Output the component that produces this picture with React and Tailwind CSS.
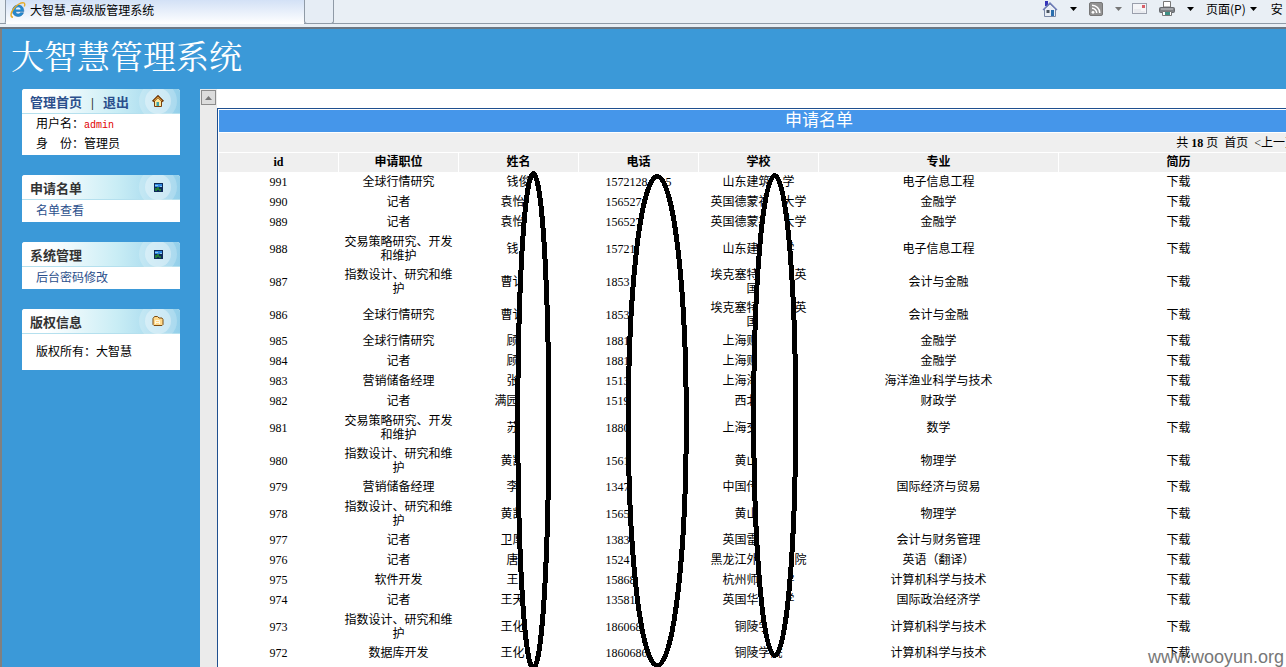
import React from "react";

const CJK = "font-['Liberation_Serif','Noto_Sans_CJK_SC',sans-serif]";

// "_" marks one concealed character in names, phones and schools.
const wide = (s) => s.replaceAll("_", "\u3000");
const digits = (s) => s.replaceAll("_", "\u00a0\u00a0");

const rows = [
  ["991", "全球行情研究", "钱俊", "1572128___5", "山东建筑_学", "电子信息工程"],
  ["990", "记者", "袁怡_", "156527_____", "英国德蒙福_大学", "金融学"],
  ["989", "记者", "袁怡_", "156527_____", "英国德蒙福_大学", "金融学"],
  ["988", "交易策略研究、开发\n和维护", "钱_", "15721______", "山东建__学", "电子信息工程"],
  ["987", "指数设计、研究和维\n护", "曹讠_", "1853_______", "埃克塞特___英\n国_", "会计与金融"],
  ["986", "全球行情研究", "曹讠_", "1853_______", "埃克塞特___英\n国_", "会计与金融"],
  ["985", "全球行情研究", "顾_", "1881_______", "上海财___", "金融学"],
  ["984", "记者", "顾_", "1881_______", "上海财___", "金融学"],
  ["983", "营销储备经理", "张_", "1513_______", "上海海___", "海洋渔业科学与技术"],
  ["982", "记者", "满园__", "1519_______", "西北__", "财政学"],
  ["981", "交易策略研究、开发\n和维护", "苏_", "1880_______", "上海交___", "数学"],
  ["980", "指数设计、研究和维\n护", "黄凯_", "1561_______", "黄山__", "物理学"],
  ["979", "营销储备经理", "李_", "1347_______", "中国传___", "国际经济与贸易"],
  ["978", "指数设计、研究和维\n护", "黄凯_", "1565_______", "黄山__", "物理学"],
  ["977", "记者", "卫厚_", "1383_______", "英国雷___", "会计与财务管理"],
  ["976", "记者", "唐_", "1524_______", "黑龙江外___院", "英语（翻译）"],
  ["975", "软件开发", "王_", "15868______", "杭州师__学", "计算机科学与技术"],
  ["974", "记者", "王天_", "13581______", "英国华__学", "国际政治经济学"],
  ["973", "指数设计、研究和维\n护", "王化_", "186068_____", "铜陵学_", "计算机科学与技术"],
  ["972", "数据库开发", "王化_", "1860686____", "铜陵学院", "计算机科学与技术"],
];

function IeIcon() {
  return (
    <svg width="16" height="16" viewBox="0 0 16 16" aria-hidden="true">
      <path d="M13.8 9.6H5.6c.2 1.5 1.300 2.300 2.600 2.300 1.100 0 1.800-.5 2.200-1.200h3.100c-.7 2.300-2.700 3.800-5.400 3.800-3.300 0-5.700-2.400-5.700-5.700C2.400 5.500 4.800 3 8.100 3c3.600 0 5.800 2.600 5.700 6.600z" fill="#2489cf" stroke="#14609f" strokeWidth=".5" />
      <path d="M5.700 7.500h4.900C10.500 6.200 9.500 5.300 8.200 5.300S5.900 6.200 5.700 7.500z" fill="#e8f4fc" />
      <path d="M3 15.200C.2 15 .4 11.200 3.500 7 6.600 2.700 11.500 0 13.800.9c1.200.5 1.200 2 .5 3.600" fill="none" stroke="#e5ac2c" strokeWidth="1.400" />
    </svg>
  );
}

function HomeIcon() {
  return (
    <svg width="16" height="18" viewBox="0 0 16 18" aria-hidden="true">
      <path d="M3 1h3v5H3z" fill="#3434b8" />
      <path d="M2.500 9 8 4l5.500 5v7.500h-11z" fill="#e9eef5" stroke="#7887a4" />
      <path d="M1 10 8 3l7 7" fill="none" stroke="#6d7bb8" strokeWidth="1.300" />
      <path d="M4.500 10h3v3h-3z" fill="#4a5560" />
      <path d="M9 10h3v6H9z" fill="#2b6fae" />
    </svg>
  );
}

function RssIcon() {
  return (
    <svg width="14" height="14" viewBox="0 0 14 14" aria-hidden="true">
      <rect x=".5" y=".5" width="13" height="13" rx="1.500" fill="#929292" stroke="#777" />
      <circle cx="4" cy="10.300" r="1.400" fill="#fff" />
      <path d="M3 6.300a4.700 4.700 0 0 1 4.700 4.700M3 3.200A7.800 7.800 0 0 1 10.800 11" fill="none" stroke="#fff" strokeWidth="1.500" />
    </svg>
  );
}

function MailIcon() {
  return (
    <svg width="15" height="11" viewBox="0 0 15 11" aria-hidden="true">
      <rect x=".5" y=".5" width="14" height="10" fill="#f4f5f8" stroke="#9a9fac" />
      <path d="M2 7h7M2 9h11" stroke="#dcdfe6" />
      <path d="M10 2h3v3h-3z" fill="#d8606a" />
    </svg>
  );
}

function PrinterIcon() {
  return (
    <svg width="16" height="16" viewBox="0 0 16 16" aria-hidden="true">
      <path d="M4.500.5h7V6h-7z" fill="#fff" stroke="#777" />
      <rect x=".5" y="6.500" width="15" height="5" rx="1" fill="#7d8085" stroke="#65686d" />
      <path d="M2 8h12" stroke="#c7c9cc" />
      <path d="M3.500 10.500h9v4h-9z" fill="#fff" stroke="#777" />
      <path d="M6 11h5v3H6z" fill="#3f8f85" />
    </svg>
  );
}

function Caret({ className = "text-black" }) {
  return (
    <svg width="7" height="4" viewBox="0 0 7 4" className={className} aria-hidden="true">
      <path d="M0 0h7L3.500 4z" fill="currentColor" />
    </svg>
  );
}

function HouseBadge() {
  return (
    <svg width="12" height="12" viewBox="0 0 12 12" aria-hidden="true">
      <path d="M2.500 6v5.500h7V6L6 2.500z" fill="#ffe79a" stroke="#7a3f0c" />
      <path d="M.7 6.500 6 1.200l5.300 5.300" fill="none" stroke="#6b3408" strokeWidth="2" />
      <path d="M1.800 6 6 1.900 10.200 6" fill="none" stroke="#eaa53c" strokeWidth="1" />
      <path d="M4.500 7H7v4H4.500z" fill="#3fa2a8" />
    </svg>
  );
}

function PictureBadge() {
  return (
    <svg width="9" height="9" viewBox="0 0 9 9" shapeRendering="crispEdges" aria-hidden="true">
      <path d="M0 0h9v9H0z" fill="#0d2a58" />
      <path d="M1 1h7v3H1z" fill="#2f86e0" />
      <path d="M1 2h3v1H1zM6 3h2v1H6z" fill="#8cc9f5" />
      <path d="M1 5h2V4h2v2h2v2H5V7H3v1H1z" fill="#207a3a" />
    </svg>
  );
}

function FolderBadge() {
  return (
    <svg width="12" height="12" viewBox="0 0 12 12" aria-hidden="true">
      <path d="M1 3.500 2.500 1.500h3L7 3h3l1 1.500v5l-1 1H2l-1-1z" fill="#ffd98a" stroke="#7a4a10" />
      <path d="M3.500 9V5.500h4V9M3.500 7.500h4" fill="none" stroke="#fff7de" />
    </svg>
  );
}

function Panel({ title, badge, children }) {
  return (
    <section className="overflow-hidden rounded-t-[3px] bg-white">
      <div className="flex h-[25px] items-center justify-between border-b border-[#b5e0ee] bg-gradient-to-r from-white from-15% via-[#c9edf5] via-60% to-[#93cfea] pr-[3px] pl-2">
        <h2 className="pt-1 text-[13px] leading-5 font-bold text-[#333]">{title}</h2>
        <span className="flex size-[38px] shrink-0 items-center justify-center rounded-full bg-white/20">
          <span className="flex size-[26px] items-center justify-center rounded-full bg-white/35">{badge}</span>
        </span>
      </div>
      {children}
    </section>
  );
}

function BrowserBar() {
  return (
    <header className="flex h-[29px] shrink-0 items-start justify-between overflow-hidden border-b-2 border-[#6b7784] bg-[#e9eff5] font-['Noto_Sans_CJK_SC',sans-serif] text-[12px]">
      <div className="flex h-6 grow border-b border-[#8f9aa6]">
        <div className="h-6 w-[6px] rounded-br-[3px] border-r border-[#8f9aa6]" />
        <div className="flex h-6 w-[298px] items-center gap-1 bg-gradient-to-b from-[#d3e1f6] to-white pb-1 pl-1">
          <IeIcon />
          <span className="leading-4">大智慧-高级版管理系统</span>
        </div>
        <button type="button" aria-label="新选项卡" className="h-6 w-[30px] rounded-b-[3px] border-x border-b border-[#8f9aa6] bg-[#e6edf5]" />
      </div>
      <nav className="flex h-6 w-[246px] shrink-0 items-center border-b border-[#8f9aa6] pb-[6px] whitespace-nowrap">
        <button type="button" aria-label="主页" className="mr-3 ml-[2px]"><HomeIcon /></button>
        <Caret />
        <button type="button" aria-label="订阅" className="mr-3 ml-3"><RssIcon /></button>
        <Caret className="text-[#777]" />
        <button type="button" aria-label="邮件" className="mr-3 ml-[10px]"><MailIcon /></button>
        <button type="button" aria-label="打印" className="mr-3"><PrinterIcon /></button>
        <Caret />
        <button type="button" className="mr-1 ml-3">页面(P)</button>
        <Caret />
        <button type="button" className="ml-[14px]">安</button>
      </nav>
    </header>
  );
}

function Sidebar() {
  return (
    <aside className="flex w-[198px] shrink-0 flex-col gap-5 px-5 text-[12px]">
      <Panel
        badge={<HouseBadge />}
        title={
          <>
            <a href="#home" className="text-[#2b4f8c]">管理首页</a>
            <span className="px-[9px]">|</span>
            <a href="#logout" className="text-[#2b4f8c]">退出</a>
          </>
        }
      >
        <div className="px-[14px] pb-px text-[12px]">
          <p className="h-5 leading-5">用户名：<span className="font-['Liberation_Mono',monospace] text-[10px] text-[#e00000]">admin</span></p>
          <p className="h-5 leading-5">身　份：管理员</p>
        </div>
      </Panel>
      <Panel title="申请名单" badge={<PictureBadge />}>
        <a href="#list" className="block px-[14px] leading-[22px] text-[#2b4f8c]">名单查看</a>
      </Panel>
      <Panel title="系统管理" badge={<PictureBadge />}>
        <a href="#password" className="block px-[14px] leading-[22px] text-[#2b4f8c]">后台密码修改</a>
      </Panel>
      <Panel title="版权信息" badge={<FolderBadge />}>
        <p className="px-[14px] py-2 leading-5">版权所有：大智慧</p>
      </Panel>
    </aside>
  );
}

function Redactions() {
  return (
    <svg className="absolute top-[59px] left-[290px]" width="300" height="510" viewBox="508 168 300 510" shapeRendering="crispEdges" aria-hidden="true">
      <g fill="#fff" stroke="#000" strokeWidth="5">
        <ellipse cx="533.300" cy="421" rx="15.500" ry="247.500" />
        <ellipse cx="657.300" cy="421" rx="29" ry="244.500" />
        <ellipse cx="774.700" cy="415.500" rx="21" ry="240" />
      </g>
    </svg>
  );
}

function Applicants() {
  const columns = ["id", "申请职位", "姓名", "电话", "学校", "专业", "简历", ""];
  return (
    <div className="relative min-h-full w-max border-t border-l border-[#1f4f8f] pt-px pl-px">
      <table className="w-[1200px] table-fixed border-separate border-spacing-0 text-center text-[12px] leading-[14px]">
        <colgroup>
          <col span={5} className="w-[120px]" />
          <col span={2} className="w-[240px]" />
          <col />
        </colgroup>
        <caption className="h-[22px] bg-[#4596ea] text-[17px] leading-[22px] text-white">申请名单</caption>
        <thead className="bg-[#efefef]">
          <tr className="h-5">
            <td colSpan={8} className="border-t border-white p-0 pr-[122px] text-right">
              共 <b>18</b> 页&nbsp; <a href="#first">首页</a>&nbsp; <a href="#prev">&lt;上一页</a>
            </td>
          </tr>
          <tr className="h-5">
            {columns.map((c, i) => (
              <th key={i} scope="col" className="border-t border-r border-white p-0 pb-px font-bold">{c}</th>
            ))}
          </tr>
        </thead>
        <tbody className="whitespace-pre">
          {rows.map(([id, job, name, phone, school, major]) => (
            <tr key={id} className={(job + school).includes("\n") ? "h-[33px]" : "h-5"}>
              <td className="p-0 pr-px">{id}</td>
              <td className="p-0 pr-px">{job}</td>
              <td className="p-0 pr-px">{wide(name)}</td>
              <td className="p-0 pr-px">{digits(phone)}</td>
              <td className="p-0 pr-px">{wide(school)}</td>
              <td className="p-0 pr-px">{major}</td>
              <td className="p-0 pr-px"><a href={"#resume-" + id}>下载</a></td>
              <td className="p-0" />
            </tr>
          ))}
        </tbody>
      </table>
      <Redactions />
    </div>
  );
}

export default function App() {
  return (
    <div className={"relative flex h-screen flex-col overflow-hidden bg-[#3b99d8] text-black " + CJK}>
      <BrowserBar />
      <div className="flex min-h-0 grow flex-col border-l-2 border-[#808080]">
        <h1 className="h-[60px] shrink-0 pl-[9px] font-['Noto_Serif_CJK_SC','Noto_Sans_CJK_SC',serif] text-[33px] leading-[52px] font-normal text-white">大智慧管理系统</h1>
        <div className="flex min-h-0 grow">
          <Sidebar />
          <div className="w-[17px] shrink-0 bg-[#ebebeb]">
            <button type="button" aria-label="向上滚动" className="mt-px ml-px flex h-[15px] w-[15px] items-center justify-center border border-[#8c8c8c] bg-[#dcdcdc] text-[#777]">
              <span className="rotate-180"><Caret className="text-[#777]" /></span>
            </button>
          </div>
          <main className="flex min-w-0 grow overflow-hidden bg-white pt-[19px]">
            <Applicants />
          </main>
        </div>
      </div>
      <div className="absolute right-[2px] bottom-0 font-['Liberation_Sans',sans-serif] text-[18px] leading-5 text-[#777]">www.wooyun.org</div>
    </div>
  );
}
